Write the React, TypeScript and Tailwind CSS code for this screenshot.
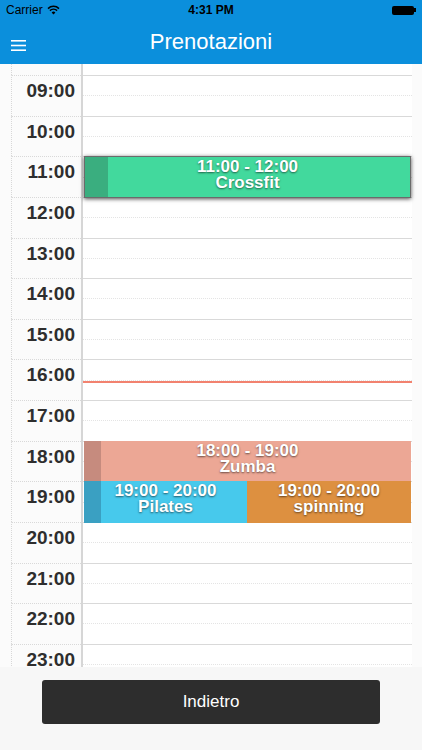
import React from 'react';

const HOURS = ['09:00', '10:00', '11:00', '12:00', '13:00', '14:00', '15:00', '16:00', '17:00', '18:00', '19:00', '20:00', '21:00', '22:00', '23:00'];

const ROW = 40.64;
const TOP = 11;

type Booking = { from: number; to: number; title: string; left: number; width: number; color: string; stripe: string; stripeW: number; shadow?: boolean };

// hours as index offsets from 09:00
const bookings: Booking[] = [
  { from: 2, to: 3, title: 'Crossfit', left: 84, width: 327, color: '#42d99d', stripe: '#3aae7f', stripeW: 23, shadow: true },
  { from: 9, to: 10, title: 'Zumba', left: 84, width: 327, color: '#eca795', stripe: '#c68b7e', stripeW: 17 },
  { from: 10, to: 11, title: 'Pilates', left: 84, width: 163, color: '#47c9ec', stripe: '#3aa0c2', stripeW: 17 },
  { from: 10, to: 11, title: 'spinning', left: 247, width: 164, color: '#dd9040', stripe: '#dd9040', stripeW: 0 },
];

const label = (i: number) => `${String(9 + i).padStart(2, '0')}:00`;

const BookingBlock = ({ b }: { b: Booking }) => {
  const top = TOP + b.from * ROW;
  const height = (b.to - b.from) * ROW + 1;
  return (
    <div
      className={`absolute ${b.shadow ? 'shadow-[0_1px_4px_rgba(0,0,0,0.7)] border border-[#6b6b6b]' : ''}`}
      style={{ top, left: b.left, width: b.width, height, backgroundColor: b.color }}
    >
      {b.stripeW > 0 && <div className="absolute left-0 top-0 h-full" style={{ width: b.stripeW, backgroundColor: b.stripe }} />}
      <div className="relative flex flex-col items-center pt-[2px] text-white font-bold text-[17px] leading-[16px] [text-shadow:0_1px_2px_rgba(0,0,0,0.55)]">
        <span>{label(b.from)} - {label(b.to)}</span>
        <span>{b.title}</span>
      </div>
    </div>
  );
};

export default function App() {
  return (
    <div className="w-[422px] h-[750px] flex flex-col overflow-hidden bg-white" style={{ fontFamily: '"Liberation Sans", Arial, sans-serif' }}>
      <div className="bg-[#0b8fdc]">
        <div className="h-[20px] flex items-center justify-between px-[6px] text-[12px] text-black relative">
          <div className="flex items-center gap-[4px]">
            <span>Carrier</span>
            <svg width="13" height="10" viewBox="0 0 13 10">
              <path d="M6.5 9.5 L4.6 7.4 A2.8 2.8 0 0 1 8.4 7.4 Z" fill="#000" />
              <path d="M2.9 5.6 A5.3 5.3 0 0 1 10.1 5.6" stroke="#000" strokeWidth="1.5" fill="none" />
              <path d="M1 3.6 A7.9 7.9 0 0 1 12 3.6" stroke="#000" strokeWidth="1.5" fill="none" />
            </svg>
          </div>
          <span className="absolute left-0 right-0 text-center font-bold">4:31 PM</span>
          <div className="flex items-center">
            <div className="w-[22px] h-[9px] bg-black rounded-[2px]" />
            <div className="w-[2px] h-[4px] bg-black" />
          </div>
        </div>
        <div className="h-[44px] flex items-center relative">
          <svg className="absolute left-[11px] top-[20px]" width="15" height="11" viewBox="0 0 15 11">
            <rect x="0" y="0" width="15" height="1.6" fill="#fff" />
            <rect x="0" y="4.7" width="15" height="1.6" fill="#fff" />
            <rect x="0" y="9.4" width="15" height="1.6" fill="#fff" />
          </svg>
          <div className="w-full text-center text-white text-[22px] pb-[2px]">Prenotazioni</div>
        </div>
      </div>

      <div className="flex-1 relative overflow-hidden bg-[#fbfbfb]">
        <div className="flex h-[11px]">
          <div className="ml-[11px] w-[70px] border-l border-dotted border-[#d8d8d8]" />
          <div className="w-[2px] bg-[#d6d6d6]" />
          <div className="flex-1 mr-[10px] bg-white" />
        </div>
        {HOURS.map((h) => (
          <div key={h} className="flex" style={{ height: ROW }}>
            <div className="ml-[11px] w-[70px] border-l border-dotted border-l-[#d8d8d8] border-t border-t-[#d9d9d9] flex justify-end pr-[6px] pt-[3px]">
              <span className="text-[19px] font-bold text-[#2e2e2e] leading-[24px]">{h}</span>
            </div>
            <div className="w-[2px] bg-[#d6d6d6]" />
            <div className="flex-1 mr-[10px] border-t border-[#d9d9d9] bg-white flex flex-col">
              <div className="flex-1 border-b border-dotted border-[#e4e4e4]" />
              <div className="flex-1" />
            </div>
          </div>
        ))}
        <div className="absolute left-[83px] w-[329px] h-[2px] bg-[#f2826f]" style={{ top: TOP + 7 * ROW + 22 }} />
        {bookings.map((b) => (
          <BookingBlock key={b.title} b={b} />
        ))}
      </div>

      <div className="h-[83px] bg-[#f7f7f7] flex justify-center pt-[13px]">
        <button className="w-[338px] h-[44px] bg-[#2d2d2d] rounded-[3px] text-white text-[17px]">
          Indietro
        </button>
      </div>
    </div>
  );
}
